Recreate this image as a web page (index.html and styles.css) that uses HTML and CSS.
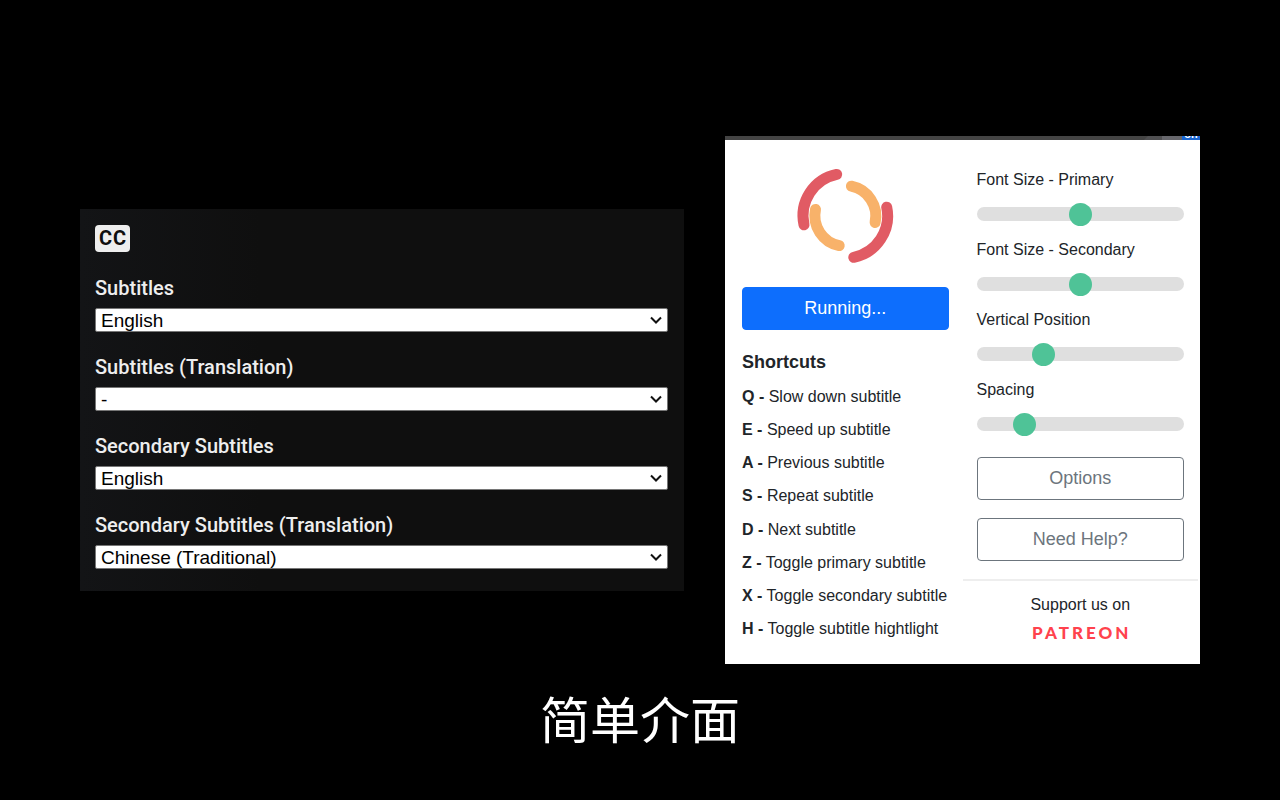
FILE: index.html
```html
<!DOCTYPE html>
<html lang="zh-CN">
<head>
<meta charset="UTF-8">
<meta name="viewport" content="width=device-width, initial-scale=1.0">
<title>简单介面</title>
<link rel="stylesheet" href="styles.css">
</head>
<body>

<main class="showcase">
    <div class="panels" lang="en">

        <!-- Subtitle selection -->
        <section class="subtitle-panel">
            <span class="cc-badge">CC</span>
            <div class="field">
                <label for="subtitles">Subtitles</label>
                <div class="select-wrap">
                    <select id="subtitles">
                        <option>English</option>
                    </select>
                    <svg class="chevron" viewBox="0 0 14 10" aria-hidden="true"><path d="M2 2.500l5 5 5-5"/></svg>
                </div>
            </div>
            <div class="field">
                <label for="subtitles-translation">Subtitles (Translation)</label>
                <div class="select-wrap">
                    <select id="subtitles-translation">
                        <option>-</option>
                    </select>
                    <svg class="chevron" viewBox="0 0 14 10" aria-hidden="true"><path d="M2 2.500l5 5 5-5"/></svg>
                </div>
            </div>
            <div class="field">
                <label for="secondary">Secondary Subtitles</label>
                <div class="select-wrap">
                    <select id="secondary">
                        <option>English</option>
                    </select>
                    <svg class="chevron" viewBox="0 0 14 10" aria-hidden="true"><path d="M2 2.500l5 5 5-5"/></svg>
                </div>
            </div>
            <div class="field">
                <label for="secondary-translation">Secondary Subtitles (Translation)</label>
                <div class="select-wrap">
                    <select id="secondary-translation">
                        <option>Chinese (Traditional)</option>
                    </select>
                    <svg class="chevron" viewBox="0 0 14 10" aria-hidden="true"><path d="M2 2.500l5 5 5-5"/></svg>
                </div>
            </div>
        </section>

        <!-- Extension popup -->
        <section class="popup">
            <div class="browser-bar">
                <span class="bar-tab"></span>
                <span class="bar-button"></span>
                <span class="bar-badge">on</span>
            </div>
            <div class="popup-body">
                <div class="popup-left">
                    <svg class="logo" viewBox="0 0 130 130" aria-hidden="true">
                        <g fill="none" stroke-width="11" stroke-linecap="round">
                            <path stroke="#e15b64" d="M56.7 24.4A42.2 42.2 0 0 0 24 74.8"/>
                            <path stroke="#e15b64" d="M106.7 57.2A42.2 42.2 0 0 1 73.8 107.3"/>
                            <path stroke="#f8b26a" d="M71.4 36.2A30.5 30.5 0 0 1 95.1 72.5"/>
                            <path stroke="#f8b26a" d="M35.5 59.4A30.5 30.5 0 0 0 59.2 95.6"/>
                        </g>
                    </svg>
                    <button type="button" class="button button-primary">Running...</button>
                    <h2>Shortcuts</h2>
                    <ul class="shortcuts">
                        <li><b>Q -</b> Slow down subtitle</li>
                        <li><b>E -</b> Speed up subtitle</li>
                        <li><b>A -</b> Previous subtitle</li>
                        <li><b>S -</b> Repeat subtitle</li>
                        <li><b>D -</b> Next subtitle</li>
                        <li><b>Z -</b> Toggle primary subtitle</li>
                        <li><b>X -</b> Toggle secondary subtitle</li>
                        <li><b>H -</b> Toggle subtitle hightlight</li>
                    </ul>
                </div>
                <div class="popup-right">
                    <div class="slider">
                        <label for="size-primary">Font Size - Primary</label>
                        <input type="range" id="size-primary" min="0" max="100" value="50">
                    </div>
                    <div class="slider">
                        <label for="size-secondary">Font Size - Secondary</label>
                        <input type="range" id="size-secondary" min="0" max="100" value="50">
                    </div>
                    <div class="slider">
                        <label for="position">Vertical Position</label>
                        <input type="range" id="position" min="0" max="100" value="30">
                    </div>
                    <div class="slider">
                        <label for="spacing">Spacing</label>
                        <input type="range" id="spacing" min="0" max="100" value="20">
                    </div>
                    <div class="actions">
                        <button type="button" class="button button-outline">Options</button>
                        <button type="button" class="button button-outline">Need Help?</button>
                    </div>
                    <div class="support">
                        <p>Support us on</p>
                        <a href="#" class="patreon">PATREON</a>
                    </div>
                </div>
            </div>
        </section>
    </div>

    <h1 class="caption">简单介面</h1>
</main>

</body>
</html>
```

FILE: styles.css
```css
* {
    box-sizing: border-box;
}
body {
    font-family: "Liberation Sans", Arial, sans-serif;
    margin: 0;
    background-color: #000;
}
.showcase {
    display: grid;
    grid-template-rows: 1fr auto 1fr;
    min-height: 100vh;
    padding: 0 80px;
}
.panels {
    grid-row: 2;
    display: grid;
    grid-template-columns: 604fr 475fr;
    gap: 41px;
    align-items: center;
}
.caption {
    grid-row: 3;
    margin: 0;
    padding-top: 17px;
    color: #fff;
    font-family: "Noto Sans CJK SC", sans-serif;
    font-size: 50px;
    font-weight: 400;
    line-height: 72px;
    text-align: center;
}

/* Subtitle selection */
.subtitle-panel {
    display: flex;
    flex-direction: column;
    gap: 23px;
    padding: 16px 16px 22px 15px;
    background: linear-gradient(to right, #131416, #0f0f0f 30%);
    color: #eee;
    font-family: Roboto, sans-serif;
}
.cc-badge {
    align-self: flex-start;
    margin-bottom: 1px;
    padding: 0 3px 0 4px;
    border-radius: 4px;
    background-color: #eee;
    color: #0f0f0f;
    font-size: 20px;
    font-weight: 700;
    letter-spacing: 1px;
    line-height: 27px;
}
.field label {
    display: block;
    margin-bottom: 8px;
    font-size: 20px;
    font-weight: 500;
    line-height: 24px;
}
.select-wrap {
    position: relative;
}
.field select {
    display: block;
    width: 100%;
    height: 24px;
    padding: 1px 5px 0;
    border: 1px solid #767676;
    border-radius: 2px;
    background-color: #fff;
    color: #000;
    font-family: "Liberation Sans", Arial, sans-serif;
    font-size: 19px;
    line-height: 22px;
    appearance: none;
}
.chevron {
    position: absolute;
    top: 7px;
    right: 5px;
    width: 14px;
    height: 10px;
    fill: none;
    stroke: #111;
    stroke-width: 2;
    pointer-events: none;
}

/* Extension popup */
.popup {
    background-color: #fff;
    color: #212529;
    font-size: 16px;
    line-height: 24px;
}
.browser-bar {
    display: flex;
    justify-content: flex-end;
    height: 4px;
    overflow: hidden;
    background-color: #444;
}
.bar-tab {
    width: 18px;
    background-color: #505052;
    clip-path: polygon(4px 0, 100% 0, 100% 100%, 0 100%);
}
.bar-button {
    width: 20px;
    background-color: #67676c;
}
.bar-badge {
    display: flex;
    align-items: flex-end;
    justify-content: center;
    width: 18px;
    background-color: #1a66d2;
    color: #fff;
    font-size: 11px;
    font-weight: 700;
    line-height: 12px;
}
.popup-body {
    display: grid;
    grid-template-columns: 1fr 1fr;
}
.popup-left {
    display: flex;
    flex-direction: column;
    padding: 10px 14px 23px 17px;
}
.logo {
    align-self: center;
    width: 130px;
    height: 130px;
}
.button {
    display: block;
    width: 100%;
    height: 43px;
    padding: 0;
    border: 1px solid;
    border-radius: 4px;
    font-family: inherit;
    font-size: 18px;
}
.button-primary {
    margin-top: 7px;
    border-color: #0d6efd;
    background-color: #0d6efd;
    color: #fff;
}
.button-outline {
    border-color: #6c757d;
    background-color: #fff;
    color: #6c757d;
}
.popup-left h2 {
    margin: 20px 0 11px;
    font-size: 18px;
    line-height: 24px;
}
.shortcuts {
    display: flex;
    flex: 1;
    flex-direction: column;
    justify-content: space-between;
    margin: 0;
    padding: 0;
    list-style: none;
    white-space: nowrap;
}
.popup-right {
    padding: 28px 16px 15px 14px;
}
.slider label {
    display: block;
}
.slider input {
    display: block;
    width: 100%;
    height: 14px;
    margin: 15px 0 17px;
    border-radius: 7px;
    background-color: #dfdfdf;
    appearance: none;
}
.slider input::-webkit-slider-thumb {
    width: 23px;
    height: 23px;
    border-radius: 50%;
    background-color: #4fc397;
    appearance: none;
}
.actions {
    display: grid;
    gap: 18px;
    margin-top: 26px;
}
.support {
    margin: 18px -14px 0;
    padding-top: 12px;
    border-top: 2px solid #eee;
    text-align: center;
}
.support p {
    margin: 0;
}
.patreon {
    display: block;
    padding-left: 3px;
    color: #ff424d;
    font-family: Lato, sans-serif;
    font-size: 17px;
    font-weight: 900;
    letter-spacing: 3px;
    line-height: 32px;
    text-decoration: none;
}
```
